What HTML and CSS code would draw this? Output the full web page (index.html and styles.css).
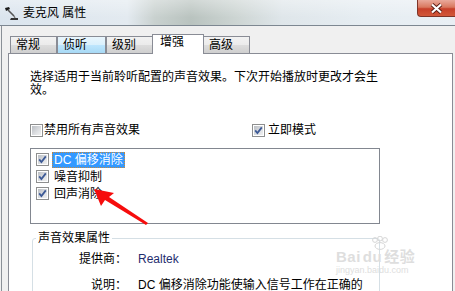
FILE: index.html
```html
<!DOCTYPE html>
<html lang="zh-CN">
<head>
  <meta charset="UTF-8" />
  <title>麦克风 属性</title>
  <link rel="stylesheet" href="styles.css">
</head>
<body>
  <div class="window">
    <div class="titlebar">
      <svg class="app-icon" width="16" height="16" viewBox="0 0 16 16">
        <path d="M2 3 L6 2 L7 4 L3 6 Z" fill="#1a1a1a"/>
        <path d="M5 5 L11 11" stroke="#555" stroke-width="1.6"/>
        <path d="M8 13 L15 13 L15 15 L7 15 Z" fill="#333"/>
        <path d="M11 11 L12 13" stroke="#777" stroke-width="1.4"/>
      </svg>
      <span class="title">麦克风 属性</span>
      <div class="close-btn">
        <svg width="13" height="11" viewBox="0 0 13 11">
          <path d="M2 1.5 L11 9.5 M11 1.5 L2 9.5" stroke="#5a1e16" stroke-width="4"/>
          <path d="M2 1.5 L11 9.5 M11 1.5 L2 9.5" stroke="#fff" stroke-width="2.2"/>
        </svg>
      </div>
    </div>

    <div class="frame">
      <div class="tabs">
        <div class="tab">常规</div>
        <div class="tab tab-hover">侦听</div>
        <div class="tab">级别</div>
        <div class="tab tab-active">增强</div>
        <div class="tab">高级</div>
      </div>

      <div class="panel">
        <p class="intro">选择适用于当前聆听配置的声音效果。下次开始播放时更改才会生效。</p>

        <div class="options">
          <label class="opt opt-wide"><span class="cb"></span>禁用所有声音效果</label>
          <label class="opt"><span class="cb"><svg class="tick" width="9" height="9" viewBox="0 0 9 9"><path d="M1.2 4.4 L3.4 7 L7.8 1.4" stroke="#3d5a96" stroke-width="1.8" fill="none"/></svg></span>立即模式</label>
        </div>

        <div class="listbox">
          <div class="item">
            <span class="cb"><svg class="tick" width="9" height="9" viewBox="0 0 9 9"><path d="M1.2 4.4 L3.4 7 L7.8 1.4" stroke="#3d5a96" stroke-width="1.8" fill="none"/></svg></span>
            <span class="item-text selected">DC 偏移消除</span>
          </div>
          <div class="item">
            <span class="cb"><svg class="tick" width="9" height="9" viewBox="0 0 9 9"><path d="M1.2 4.4 L3.4 7 L7.8 1.4" stroke="#3d5a96" stroke-width="1.8" fill="none"/></svg></span>
            <span class="item-text">噪音抑制</span>
          </div>
          <div class="item">
            <span class="cb"><svg class="tick" width="9" height="9" viewBox="0 0 9 9"><path d="M1.2 4.4 L3.4 7 L7.8 1.4" stroke="#3d5a96" stroke-width="1.8" fill="none"/></svg></span>
            <span class="item-text">回声消除</span>
          </div>
        </div>

        <fieldset class="props">
          <legend>声音效果属性</legend>
          <div class="prop-grid">
            <span class="prop-label">提供商：</span>
            <span class="prop-value vendor">Realtek</span>
            <span class="prop-label">说明：</span>
            <span class="prop-value">DC 偏移消除功能使输入信号工作在正确的</span>
          </div>
        </fieldset>
      </div>
    </div>

    <!-- red annotation arrow drawn on the screenshot -->
    <svg class="arrow" width="455" height="291" viewBox="0 0 455 291">
      <polygon points="94,189 114,193 109,197 148,223 146,225 105,200 101,206" fill="#f60c0c"/>
    </svg>

    <div class="watermark">
      <svg class="paw" width="22" height="14" viewBox="0 0 22 14">
        <circle cx="6" cy="4" r="2.4" fill="none" stroke="#d6d6d6"/>
        <circle cx="11" cy="2.6" r="2.4" fill="none" stroke="#d6d6d6"/>
        <circle cx="16" cy="4" r="2.4" fill="none" stroke="#d6d6d6"/>
        <ellipse cx="11" cy="10" rx="5" ry="3.4" fill="none" stroke="#d6d6d6"/>
      </svg>
      <div class="wm-brand">Bai<span class="wm-du">du</span>经验</div>
      <div class="wm-url">jingyan.baidu.com</div>
    </div>
  </div>
</body>
</html>
```

FILE: styles.css
```css
body {
  margin: 0;
  padding: 0;
  font-family: "Liberation Sans", "Noto Sans CJK SC", sans-serif;
  font-size: 12px;
  color: #000;
  background: #f0f0f0;
}
.window {
  position: relative;
  width: 455px;
  height: 291px;
  overflow: hidden;
}
.titlebar {
  height: 25px;
  display: flex;
  align-items: center;
  border-bottom: 1px solid #7d8791;
  background:
    linear-gradient(180deg, rgba(255,255,255,0.35), rgba(255,255,255,0) 70%),
    linear-gradient(90deg, #dbe5ee 0%, #e3eaf0 28%, #c9d1cf 34%, #b9c3bf 42%, #cdd5d3 52%, #dfe6ea 62%, #e6edf2 80%, #e9eff4 100%);
}
.app-icon {
  margin-left: 3px;
  margin-top: 1px;
}
.title {
  margin-left: 4px;
  font-size: 12px;
  line-height: 14px;
}
.close-btn {
  margin-left: auto;
  align-self: flex-start;
  width: 38px;
  height: 17px;
  box-sizing: border-box;
  border: 1px solid #7e3428;
  border-top: none;
  border-right: none;
  border-radius: 0 0 0 4px;
  background: linear-gradient(180deg, #e9a99b 0%, #d9785f 45%, #c7402a 55%, #d2583a 100%);
  display: flex;
  align-items: center;
  justify-content: center;
}
.frame {
  margin-left: 1px;
  border-left: 1px solid #8a9097;
  padding: 8px 2px 0 6px;
  height: 265px;
  box-sizing: border-box;
}
.tabs {
  display: flex;
  align-items: flex-end;
  height: 19px;
  margin-left: 2px;
  position: relative;
  z-index: 1;
}
.tab {
  height: 17px;
  box-sizing: border-box;
  padding: 0 16px 0 5px;
  border: 1px solid #898c95;
  border-bottom: none;
  line-height: 16px;
  background: linear-gradient(180deg, #f2f2f2 0%, #ebebeb 50%, #dddddd 50%, #cfcfcf 100%);
}
.tab-hover {
  padding-right: 18px;
  background: linear-gradient(180deg, #eaf6fd 0%, #d9f0fc 50%, #bee6fd 50%, #a7d9f5 100%);
}
.tab-active {
  height: 20px;
  margin: 0 -1px -1px -1px;
  padding: 0 19px 0 7px;
  line-height: 14px;
  background: #fff;
}
.panel {
  height: 240px;
  box-sizing: border-box;
  background: #fff;
  border: 1px solid #898c95;
  border-bottom: none;
  padding: 17px 0 0 21px;
}
.intro {
  margin: 0;
  width: 350px;
  line-height: 13px;
}
.options {
  display: flex;
  margin-top: 27px;
  height: 13px;
}
.opt {
  display: flex;
  align-items: center;
  gap: 1px;
  line-height: 13px;
}
.opt-wide {
  width: 222px;
}
.opt:last-child {
  gap: 3px;
}
.cb {
  width: 13px;
  height: 13px;
  box-sizing: border-box;
  flex: none;
  border: 1px solid #8e8f8f;
  padding: 1px;
  background: linear-gradient(135deg, #b4b8be 0%, #dfe1e4 60%, #f4f4f4 100%);
  background-clip: content-box;
  display: flex;
}
.tick {
  display: block;
}
.listbox {
  margin-top: 11px;
  width: 350px;
  height: 76px;
  box-sizing: border-box;
  border: 1px solid #828790;
  padding: 2px 0 0 5px;
}
.item {
  height: 17px;
  display: flex;
  align-items: center;
  gap: 3px;
}
.item-text {
  padding: 0 1px;
  line-height: 14px;
  border: 1px solid transparent;
}
.selected {
  background: #3399ff;
  color: #fff;
  border: 1px dotted #c9893a;
}
.props {
  margin: 8px 0 0 2px;
  width: 348px;
  box-sizing: border-box;
  border: 1px solid #d5dfe5;
  border-radius: 3px;
  padding: 0 0 10px 0;
}
.props legend {
  margin-left: 3px;
  padding: 0 2px;
  line-height: 13px;
}
.prop-grid {
  display: grid;
  grid-template-columns: 94px auto;
  column-gap: 11px;
  row-gap: 13px;
  padding-top: 8px;
  line-height: 13px;
}
.prop-label {
  text-align: right;
}
.prop-value {
  white-space: nowrap;
}
.vendor {
  color: #1f2d6e;
}
.arrow {
  position: absolute;
  left: 0;
  top: 0;
  pointer-events: none;
}
.watermark {
  position: absolute;
  left: 336px;
  top: 236px;
  width: 90px;
  text-align: center;
  color: #dedede;
}
.paw {
  display: block;
  margin: 0 0 0 33px;
}
.wm-brand {
  font-size: 15px;
  line-height: 14px;
  font-weight: bold;
  text-align: left;
  letter-spacing: 0.5px;
}
.wm-du {
  margin: 0 2px;
}
.wm-url {
  font-size: 9px;
  line-height: 12px;
  text-align: left;
}
```
